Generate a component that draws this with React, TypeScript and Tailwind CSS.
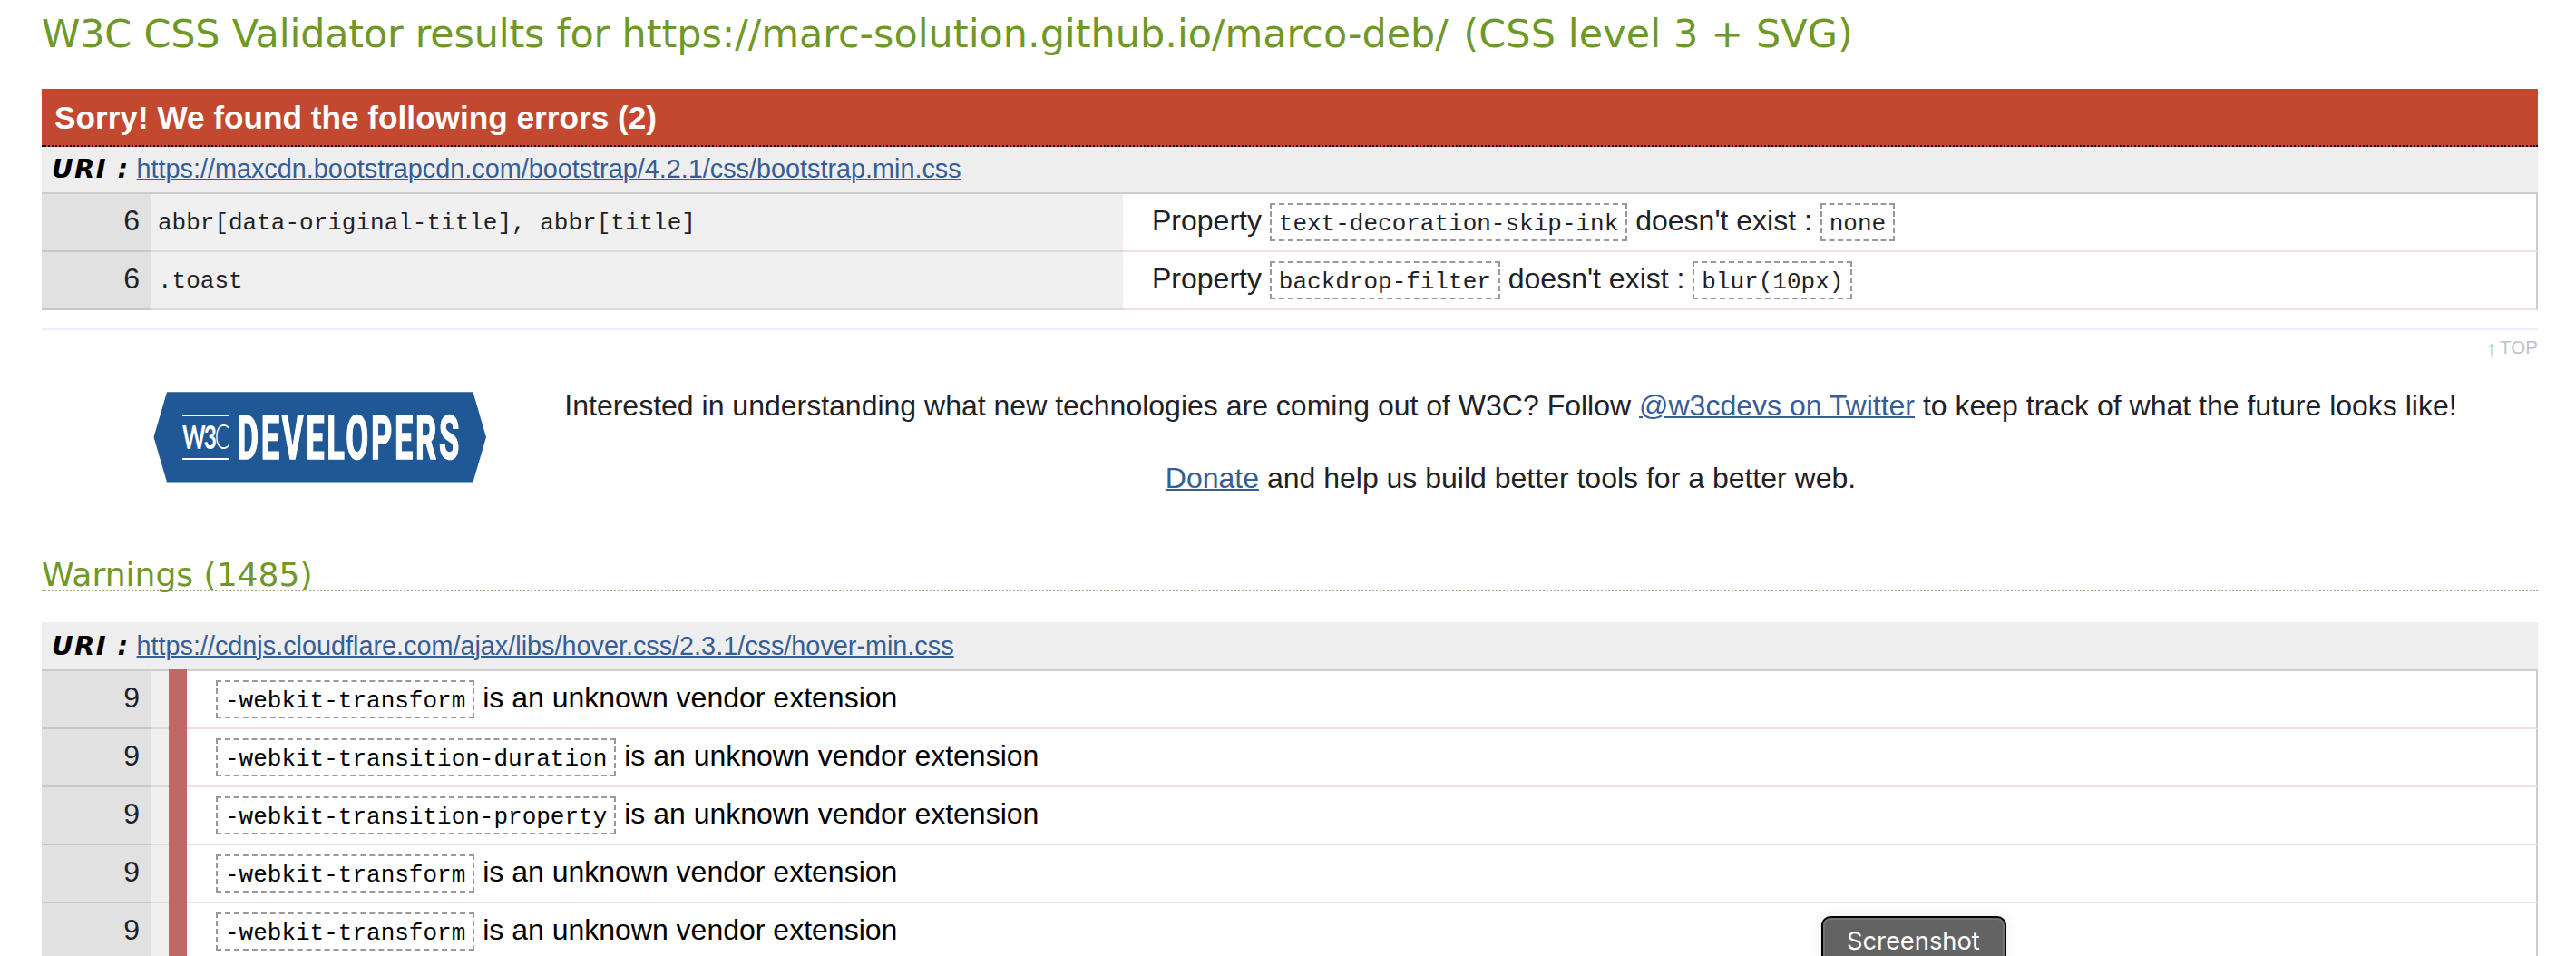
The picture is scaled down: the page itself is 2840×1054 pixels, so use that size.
import React from 'react';

function Value({ children }: { children: React.ReactNode }) {
  return (
    <code className="border-2 border-dashed border-[#999999] px-2 pt-[6px] pb-[2px] font-['Liberation_Mono',monospace] text-[26px]">
      {children}
    </code>
  );
}

function UriBar({ href, className }: { href: string; className: string }) {
  return (
    <div className={`flex bg-[#eeeeee] text-[28.8px] leading-[48px] ${className}`}>
      <span className="w-[104.5px] shrink-0 whitespace-pre pl-[11px] font-['DejaVu_Sans',sans-serif] text-[29.2px] font-bold italic tracking-[1.3px] text-black">
        URI :
      </span>
      <a className="text-[#365d95] underline decoration-2">{href}</a>
    </div>
  );
}

function ErrorRow({ line, context, property, value }: { line: number; context: string; property: string; value: string }) {
  return (
    <div className="grid h-16 grid-cols-[120px_1072px_1fr] grid-rows-[64px] leading-[58px]">
      <div className="border-b-2 border-[#c8c8c8] bg-[#e1e1e1] pr-3 text-right">{line}</div>
      <div className="border-b-2 border-[#dadada] bg-[#f0f0f0] pl-2 font-['Liberation_Mono',monospace] text-[26px] leading-[65px]">
        {context}
      </div>
      <div className="border-r-2 border-b-2 border-r-[#cccccc] border-b-[#f7dede] bg-white pl-8">
        Property <Value>{property}</Value> doesn't exist : <Value>{value}</Value>
      </div>
    </div>
  );
}

function WarningRow({ line, property }: { line: number; property: string }) {
  return (
    <div className="grid h-16 grid-cols-[120px_20px_20px_1fr] grid-rows-[64px] leading-[58px]">
      <div className="border-b-2 border-[#c8c8c8] bg-[#e1e1e1] pr-3 text-right">{line}</div>
      <div className="border-b-2 border-[#dadada] bg-[#f0f0f0]" />
      <div className="bg-[#c06868]" />
      <div className="border-r-2 border-b-2 border-r-[#cccccc] border-b-[#f7dede] bg-white pl-8 text-black">
        <Value>{property}</Value> is an unknown vendor extension
      </div>
    </div>
  );
}

function DevelopersLogo() {
  return (
    <svg className="mt-[25px] h-[100px] w-[368px] shrink-0 overflow-visible" viewBox="0 0 368 100" fill="#ffffff">
      <polygon points="0.5,50 15,0.3 352.5,0.3 367,50 352.5,99.5 15,99.5" fill="#205896" />
      <rect x="32" y="25" width="52" height="2" />
      <rect x="32" y="73" width="52" height="2" />
      <text transform="translate(32 62.5) scale(0.66 1)" fontFamily="Lato, sans-serif" fontSize="37">
        <tspan fontWeight="700">W</tspan>
        <tspan fontWeight="700" dx="-3">3</tspan>
        <tspan fontWeight="300" dx="-3">C</tspan>
      </text>
      <text x="92.5" y="74" fontFamily="Roboto, sans-serif" fontSize="67.5" fontWeight="700" stroke="#ffffff" strokeWidth="1.6" letterSpacing="5" textLength="247.5" lengthAdjust="spacingAndGlyphs">DEVELOPERS</text>
    </svg>
  );
}

const warnings = [
  '-webkit-transform',
  '-webkit-transition-duration',
  '-webkit-transition-property',
  '-webkit-transform',
  '-webkit-transform',
];

export default function App() {
  return (
    <div className="relative h-[1054px] w-[2840px] overflow-hidden bg-white pr-[42px] pl-[46px] font-['Liberation_Sans',Arial,sans-serif] text-[32px] text-[#1f2126]">
      <h1 className="h-[98px] whitespace-nowrap font-['DejaVu_Sans',sans-serif] text-[42.92px] leading-[74px] text-[#709829]">
        <span className="tracking-[-0.2px]">W3C CSS Validator results for </span>
        https://marc-solution.github.io/marco-deb/
        <span className="ml-[3px] tracking-[0.1px]"> (CSS level 3 + SVG)</span>
      </h1>

      <h3 className="h-16 border-b-2 border-dotted border-black bg-[#c24930] pl-[14px] text-[35.2px] leading-[64px] font-bold text-white">
        Sorry! We found the following errors (2)
      </h3>
      <UriBar className="h-[50px]" href="https://maxcdn.bootstrapcdn.com/bootstrap/4.2.1/css/bootstrap.min.css" />
      <div className="border-t-2 border-[#cccccc]">
        <ErrorRow line={6} context="abbr[data-original-title], abbr[title]" property="text-decoration-skip-ink" value="none" />
        <ErrorRow line={6} context=".toast" property="backdrop-filter" value="blur(10px)" />
      </div>

      <div className="mt-5 flex h-[45px] items-start justify-end gap-[3px] border-t-2 border-[#eeeeff] pt-[2px] text-[20.6px] leading-[34px] text-[#bfbfcf]">
        <span className="text-[25px] leading-[36px]">↑</span>
        <span>TOP</span>
      </div>

      <div className="flex h-40 pl-[123px]">
        <DevelopersLogo />
        <div className="ml-[66px] w-[2125px] text-center leading-[80px]">
          <p>
            Interested in understanding what new technologies are coming out of W3C? Follow{' '}
            <a className="text-[#365d95] underline decoration-2">@w3cdevs on Twitter</a> to keep track of what the future looks like!
          </p>
          <p>
            <a className="text-[#365d95] underline decoration-2">Donate</a> and help us build better tools for a better web.
          </p>
        </div>
      </div>

      <h2 className="mb-[34px] h-[85px] border-b-2 border-dotted border-[#aaaa77] pt-[45px] font-['DejaVu_Sans',sans-serif] text-[36.1px] leading-[44px] text-[#709829]">
        Warnings (1485)
      </h2>

      <UriBar className="h-[52px] pt-[2px]" href="https://cdnjs.cloudflare.com/ajax/libs/hover.css/2.3.1/css/hover-min.css" />
      <div className="grid h-[2px] grid-cols-[140px_20px_1fr] bg-[#cccccc]">
        <div />
        <div className="bg-[#c06868]" />
      </div>
      {warnings.map((property, i) => (
        <WarningRow key={i} line={9} property={property} />
      ))}

      <div className="absolute top-[1010px] left-[2008px] h-[60px] w-[204px] rounded-[10px] border-2 border-black bg-[#636363] pl-[26px] font-['Inter',sans-serif] text-[27.3px] leading-[52px] text-white shadow-[inset_0_0_0_2px_#747474,0_0_16px_rgba(0,0,0,0.08)]">
        Screenshot
      </div>
    </div>
  );
}
